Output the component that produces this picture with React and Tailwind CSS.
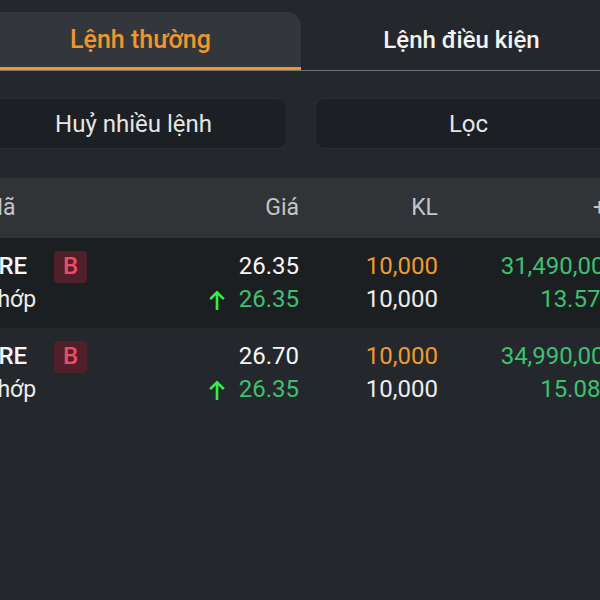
import React from 'react';

const rows = [
  { code: 'VRE', side: 'B', price: '26.35', status: 'Khớp', matched: '26.35', qty: '10,000', matchedQty: '10,000', value: '31,490,000', pct: '13.57%' },
  { code: 'VRE', side: 'B', price: '26.70', status: 'Khớp', matched: '26.35', qty: '10,000', matchedQty: '10,000', value: '34,990,000', pct: '15.08%' },
];

function ArrowUp() {
  return (
    <svg viewBox="0 0 16 20" className="w-[16px] h-[20px]" fill="none" stroke="#34f044" strokeWidth="2.6" strokeLinecap="butt">
      <path d="M8 20V2.5" />
      <path d="M1.2 9.2L8 2.4l6.8 6.8" />
    </svg>
  );
}

export default function App() {
  return (
    <div className="w-[600px] h-[600px] overflow-hidden bg-[#24282c] font-['Roboto',sans-serif]">
      <div className="ml-[-20px] w-[646px]">
        {/* Tabs */}
        <div className="flex pt-[12px] border-b-[1.5px] border-[#707377]">
          <div className="w-[321px] h-[58px] flex items-center justify-center bg-[#33373b] rounded-tr-[14px] border-b-[3px] border-[#f0962c] -mb-[1.5px]">
            <span className="text-[25px] font-medium text-[#f0962c]">Lệnh thường</span>
          </div>
          <div className="w-[321px] h-[58px] flex items-center justify-center pb-[3px]">
            <span className="text-[24px] font-medium text-[#f4f4f4]">Lệnh điều kiện</span>
          </div>
        </div>

        {/* Actions */}
        <div className="flex gap-[28px] mt-[27px] w-[642px]">
          <div className="flex-1 h-[51px] flex items-center justify-center rounded-[10px] bg-[#1c1f23] border border-[#2b2f33] text-[24px] text-[#e6e6e6]">
            Huỷ nhiều lệnh
          </div>
          <div className="flex-1 h-[51px] flex items-center justify-center rounded-[10px] bg-[#1c1f23] border border-[#2b2f33] text-[24px] text-[#e6e6e6]">
            Lọc
          </div>
        </div>

        {/* Table header */}
        <div className="flex items-center h-[60px] mt-[29px] bg-[#303437] pl-[3px] text-[23px] text-[#c3c5c7]">
          <div className="w-[200px]">Mã</div>
          <div className="w-[116px] text-right">Giá</div>
          <div className="w-[139px] text-right">KL</div>
          <div className="w-[184px] text-right">+/-</div>
        </div>

        {/* Rows */}
        {rows.map((r, i) => (
          <div
            key={i}
            className={`flex py-[12px] pl-[3px] text-[24px] leading-[33px] ${i === 0 ? 'bg-[#1c1f22]' : 'bg-[#24282c]'}`}
          >
            <div className="w-[200px]">
              <div className="flex items-center">
                <span className="w-[71px] font-medium text-[#f6f6f6]">{r.code}</span>
                <span className="w-[33px] h-[32px] flex items-center justify-center rounded-[4px] bg-[#4f2029] text-[#ee4c64] font-medium">
                  {r.side}
                </span>
              </div>
              <div className="text-[23px] text-[#ececec]">{r.status}</div>
            </div>
            <div className="w-[116px] text-right">
              <div className="text-[#f6f6f6]">{r.price}</div>
              <div className="flex items-center justify-end gap-[14px] text-[#3ec070]">
                <ArrowUp />
                <span>{r.matched}</span>
              </div>
            </div>
            <div className="w-[139px] text-right">
              <div className="text-[#f2992e]">{r.qty}</div>
              <div className="text-[#ececec]">{r.matchedQty}</div>
            </div>
            <div className="w-[180px] text-right text-[#3ec070]">
              <div>{r.value}</div>
              <div>{r.pct}</div>
            </div>
          </div>
        ))}
      </div>
    </div>
  );
}
